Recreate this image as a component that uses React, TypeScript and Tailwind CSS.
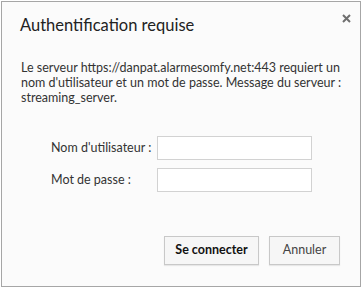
import React from 'react';

const font = { fontFamily: 'Lato, "Open Sans", sans-serif' };

const Field: React.FC<{ label: string; type?: string }> = ({ label, type = 'text' }) => (
    <div className="flex items-center">
        <label className="w-[106px] text-[12.5px] text-[#333]">{label}</label>
        <input type={type} className="w-[155px] h-[24px] bg-white border border-[#d2d2d2] outline-none" />
    </div>
);

const App: React.FC = () => {
    return (
        <div className="w-[362px] h-[287px] bg-white pl-[1px] pt-[1px]" style={font}>
            <div className="relative w-[360px] h-[286px] border border-[#a6a6a6] bg-[#fbfbfb] flex flex-col">
                <button className="absolute right-[9px] top-[11px] w-[10px] h-[10px] flex items-center justify-center">
                    <svg width="9" height="9" viewBox="0 0 9 9">
                        <path d="M1 1 L8 8 M8 1 L1 8" stroke="#6f6f6f" strokeWidth="2" />
                    </svg>
                </button>
                <h1 className="pl-[18px] pt-[11px] text-[16.5px] leading-[24px] text-[#222]">Authentification requise</h1>
                <p className="pl-[19px] pr-[10px] mt-[23px] text-[12.5px] leading-[15px] text-[#333]">
                    Le serveur https://danpat.alarmesomfy.net:443 requiert un nom d'utilisateur et un mot de passe. Message du serveur : streaming_server.
                </p>
                <div className="pl-[49px] mt-[31px] flex flex-col gap-[8px]">
                    <Field label="Nom d'utilisateur :" />
                    <Field label="Mot de passe :" type="password" />
                </div>
                <div className="mt-auto mb-[21px] pr-[20px] flex justify-end gap-[10px]">
                    <button className="w-[95px] h-[29px] bg-[#f6f6f6] border border-[#c8c8c8] shadow-[0_1px_1px_rgba(0,0,0,0.08)] text-[12.5px] font-bold text-[#111]">Se connecter</button>
                    <button className="w-[71px] h-[29px] bg-[#f6f6f6] border border-[#c8c8c8] shadow-[0_1px_1px_rgba(0,0,0,0.08)] text-[12.5px] text-[#444]">Annuler</button>
                </div>
            </div>
        </div>
    );
};

export default App;
